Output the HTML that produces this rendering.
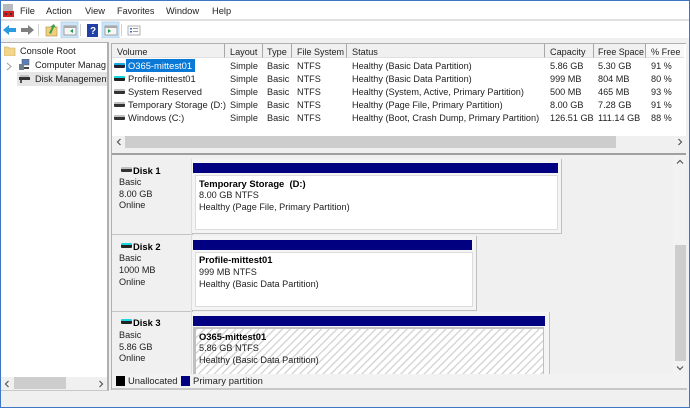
<!DOCTYPE html>
<html style="background:#f0f0f0"><head><meta charset="utf-8"><style>
html,body{margin:0;padding:0;width:690px;height:408px;overflow:hidden}
body{position:relative;font-family:"Liberation Sans",sans-serif;font-size:9.15px;color:#222;filter:blur(.3px)}
.a{position:absolute}
.t{position:absolute;white-space:pre;line-height:12px;height:12px}
.b{font-weight:bold;color:#000}
.m{font-size:9.3px}
.dk{position:absolute;width:11px;height:5px;background:linear-gradient(#c0c0c0 0 2px,#333 2px);border-radius:1px}
.dk.c{background:linear-gradient(#19d5e0 0 2px,#222 2px)}
.dk.u{background:linear-gradient(#19a8e0 0 2px,#223 2px)}
.h{position:absolute;top:44px;height:14px;background:#f0f0f0;border-right:1px solid #a8a8a8;border-bottom:1px solid #e0e0e0;box-sizing:border-box}
</style></head><body>
<div class="a" style="left:0;top:0;width:690px;height:408px;background:#f0f0f0"></div>
<div class="a" style="left:0;top:0;width:690px;height:19px;background:#fff"></div>
<div class="a" style="left:0;top:19px;width:690px;height:2px;background:#e0e0e0"></div>
<div class="a" style="left:0;top:21px;width:690px;height:17px;background:#fff"></div>

<!-- app icon -->
<svg class="a" style="left:1px;top:3px" width="14" height="15" viewBox="0 0 14 15"><rect x="2" y="1" width="10" height="7" fill="#b4bac0"/><rect x="2" y="8" width="11" height="6" fill="#d82020"/><rect x="4" y="10" width="2" height="2" fill="#333"/><rect x="9" y="10" width="2" height="2" fill="#333"/></svg>
<div class="t m" style="left:20px;top:5px">File</div>
<div class="t m" style="left:46px;top:5px">Action</div>
<div class="t m" style="left:85px;top:5px">View</div>
<div class="t m" style="left:117px;top:5px;font-size:9.1px">Favorites</div>
<div class="t m" style="left:166px;top:5px">Window</div>
<div class="t m" style="left:212px;top:5px">Help</div>

<!-- toolbar -->
<svg class="a" style="left:0;top:21px" width="150" height="17" viewBox="0 0 150 17">
<path d="M3 9 L9 4 V7 H16 V11 H9 V14 Z" fill="#2b9be0"/>
<path d="M34 9 L28 4 V7 H21 V11 H28 V14 Z" fill="#808080"/>
<rect x="38" y="3" width="1" height="12" fill="#d0d0d0"/>
<rect x="46" y="6" width="11" height="9" fill="#f0d080" stroke="#b89a50" stroke-width=".7"/>
<path d="M49 12 L52 6 L50 6 L54 3 L56 7 L54 6 L51 13 Z" fill="#3aa040"/>
<rect x="61" y="1" width="17" height="16" fill="#cde4f7" stroke="#a8d0f0" stroke-width=".8"/>
<rect x="64" y="5" width="12" height="9" fill="#f6f6f6" stroke="#909090" stroke-width=".8"/><rect x="64" y="5" width="12" height="2" fill="#a8a8a8"/><path d="M73 8 V12 L70 10 Z" fill="#1f9a50"/>
<rect x="80" y="3" width="1" height="12" fill="#d0d0d0"/>
<rect x="87" y="3" width="11" height="13" fill="#2040a8"/><text x="90" y="13" font-family="Liberation Sans" font-size="10" font-weight="bold" fill="#fff">?</text>
<rect x="102" y="1" width="17" height="16" fill="#cde4f7" stroke="#a8d0f0" stroke-width=".8"/>
<rect x="105" y="5" width="12" height="9" fill="#f6f6f6" stroke="#909090" stroke-width=".8"/><rect x="105" y="5" width="12" height="2" fill="#a8a8a8"/><path d="M108 8 V12 L111 10 Z" fill="#1f9a50"/>
<rect x="121" y="3" width="1" height="12" fill="#d0d0d0"/>
<rect x="128" y="5" width="12" height="9" fill="#fafafa" stroke="#a0a0a0" stroke-width=".8"/><rect x="130" y="7" width="2" height="1.5" fill="#3a70c0"/><rect x="130" y="10" width="2" height="1.5" fill="#3a70c0"/><rect x="133" y="7" width="5" height="1" fill="#999"/><rect x="133" y="10" width="5" height="1" fill="#999"/>
</svg>

<!-- left pane -->
<div class="a" style="left:1px;top:42px;width:108px;height:349px;background:#fff;border-right:2px solid #b0b0b0;border-top:1px solid #b0b0b0;border-bottom:1px solid #c8c8c8;box-sizing:border-box"></div>
<svg class="a" style="left:4px;top:46px" width="12" height="10"><path d="M0 1 H4 L5 2 H11 V10 H0 Z" fill="#f2d78a" stroke="#c8a860" stroke-width=".6"/></svg>
<div class="t" style="left:20px;top:45px;font-size:9.2px">Console Root</div>
<svg class="a" style="left:6px;top:62px" width="6" height="9"><path d="M1 1 L5 4.5 L1 8" fill="none" stroke="#a0a0a0"/></svg>
<svg class="a" style="left:18px;top:59px" width="12" height="12"><rect x="4" y="0" width="7" height="6" fill="#5b7fb8" stroke="#555" stroke-width=".5"/><rect x="1" y="5" width="5" height="6" fill="#708090"/><rect x="6" y="8" width="5" height="2" fill="#444"/></svg>
<div class="t" style="left:35px;top:59px;font-size:9.2px;width:72px;overflow:hidden">Computer Manag</div>
<div class="a" style="left:17px;top:72px;width:90px;height:14px;background:#e6e6e6"></div>
<svg class="a" style="left:19px;top:75px" width="11" height="8"><rect x="1" y="0" width="9" height="2" fill="#c0c0c0"/><rect x="0" y="2" width="11" height="3" fill="#333"/><rect x="1" y="5" width="2" height="3" fill="#555"/></svg>
<div class="t" style="left:35px;top:73px;font-size:9.2px;width:72px;overflow:hidden">Disk Management</div>
<div class="a" style="left:1px;top:377px;width:106px;height:13px;background:#f0f0f0"></div>
<div class="a" style="left:14px;top:377px;width:52px;height:12px;background:#cdcdcd"></div>
<svg class="a" style="left:4px;top:380px" width="6" height="8"><path d="M4.5 1 L1.5 4 L4.5 7" fill="none" stroke="#555" stroke-width="1.2"/></svg>
<svg class="a" style="left:98px;top:380px" width="6" height="8"><path d="M1.5 1 L4.5 4 L1.5 7" fill="none" stroke="#555" stroke-width="1.2"/></svg>

<!-- right outer -->
<div class="a" style="left:111px;top:43px;width:575px;height:105px;background:#fff;border-left:1px solid #b0b0b0;border-top:1px solid #b0b0b0;box-sizing:border-box"></div>

<!-- headers -->
<div class="h" style="left:112px;width:113px"></div>
<div class="h" style="left:225px;width:38px"></div>
<div class="h" style="left:263px;width:29px"></div>
<div class="h" style="left:292px;width:55px"></div>
<div class="h" style="left:347px;width:198px"></div>
<div class="h" style="left:545px;width:49px"></div>
<div class="h" style="left:594px;width:52px"></div>
<div class="h" style="left:646px;width:38px;border-right:none;background:#f8f8f8"></div>
<div class="t" style="left:117px;top:46px">Volume</div>
<div class="t" style="left:230px;top:46px">Layout</div>
<div class="t" style="left:267px;top:46px">Type</div>
<div class="t" style="left:297px;top:46px;font-size:9px">File System</div>
<div class="t" style="left:352px;top:46px">Status</div>
<div class="t" style="left:550px;top:46px">Capacity</div>
<div class="t" style="left:598px;top:46px;font-size:8.9px">Free Space</div>
<div class="t" style="left:651px;top:46px">% Free</div>

<!-- rows -->
<div class="a" style="left:126px;top:59px;width:69px;height:13px;background:#0a78d7"></div>
<div class="dk u" style="left:114px;top:63px"></div>
<div class="t" style="left:128px;top:60px;color:#fff;font-size:9.4px">O365-mittest01</div>
<div class="t" style="left:230px;top:60px">Simple</div><div class="t" style="left:267px;top:60px">Basic</div><div class="t" style="left:297px;top:60px">NTFS</div><div class="t" style="left:352px;top:60px">Healthy (Basic Data Partition)</div><div class="t" style="left:550px;top:60px">5.86 GB</div><div class="t" style="left:598px;top:60px">5.30 GB</div><div class="t" style="left:651px;top:60px">91 %</div>

<div class="dk c" style="left:114px;top:76px"></div>
<div class="t" style="left:128px;top:73px;font-size:9.4px">Profile-mittest01</div>
<div class="t" style="left:230px;top:73px">Simple</div><div class="t" style="left:267px;top:73px">Basic</div><div class="t" style="left:297px;top:73px">NTFS</div><div class="t" style="left:352px;top:73px">Healthy (Basic Data Partition)</div><div class="t" style="left:550px;top:73px">999 MB</div><div class="t" style="left:598px;top:73px">804 MB</div><div class="t" style="left:651px;top:73px">80 %</div>

<div class="dk" style="left:114px;top:89px"></div>
<div class="t" style="left:128px;top:86px;font-size:9.4px">System Reserved</div>
<div class="t" style="left:230px;top:86px">Simple</div><div class="t" style="left:267px;top:86px">Basic</div><div class="t" style="left:297px;top:86px">NTFS</div><div class="t" style="left:352px;top:86px">Healthy (System, Active, Primary Partition)</div><div class="t" style="left:550px;top:86px">500 MB</div><div class="t" style="left:598px;top:86px">465 MB</div><div class="t" style="left:651px;top:86px">93 %</div>

<div class="dk" style="left:114px;top:102px"></div>
<div class="t" style="left:128px;top:99px;font-size:9.4px">Temporary Storage (D:)</div>
<div class="t" style="left:230px;top:99px">Simple</div><div class="t" style="left:267px;top:99px">Basic</div><div class="t" style="left:297px;top:99px">NTFS</div><div class="t" style="left:352px;top:99px">Healthy (Page File, Primary Partition)</div><div class="t" style="left:550px;top:99px">8.00 GB</div><div class="t" style="left:598px;top:99px">7.28 GB</div><div class="t" style="left:651px;top:99px">91 %</div>

<div class="dk" style="left:114px;top:115px"></div>
<div class="t" style="left:128px;top:112px;font-size:9.4px">Windows (C:)</div>
<div class="t" style="left:230px;top:112px">Simple</div><div class="t" style="left:267px;top:112px">Basic</div><div class="t" style="left:297px;top:112px">NTFS</div><div class="t" style="left:352px;top:112px">Healthy (Boot, Crash Dump, Primary Partition)</div><div class="t" style="left:550px;top:112px">126.51 GB</div><div class="t" style="left:598px;top:112px">111.14 GB</div><div class="t" style="left:651px;top:112px">88 %</div>

<!-- list hscroll -->
<div class="a" style="left:112px;top:136px;width:574px;height:12px;background:#f0f0f0"></div>
<div class="a" style="left:125px;top:136px;width:491px;height:12px;background:#cdcdcd"></div>
<svg class="a" style="left:116px;top:138px" width="6" height="8"><path d="M4.5 1 L1.5 4 L4.5 7" fill="none" stroke="#555" stroke-width="1.2"/></svg>
<svg class="a" style="left:677px;top:138px" width="6" height="8"><path d="M1.5 1 L4.5 4 L1.5 7" fill="none" stroke="#555" stroke-width="1.2"/></svg>

<!-- lower pane -->
<div class="a" style="left:111px;top:153px;width:575px;height:2px;background:#a0a0a0"></div>
<div class="a" style="left:112px;top:155px;width:574px;height:219px;background:#f0f0f0"></div>
<div class="a" style="left:112px;top:234px;width:81px;height:1px;background:#c4c4c4"></div>
<div class="a" style="left:112px;top:311px;width:81px;height:1px;background:#c4c4c4"></div>
<div class="a" style="left:191px;top:159px;width:1px;height:215px;background:#dcdcdc"></div>

<!-- disk labels -->
<div class="dk" style="left:121px;top:167px"></div>
<div class="t b" style="left:133px;top:165px;font-size:9.4px">Disk 1</div>
<div class="t" style="left:119px;top:176px">Basic</div><div class="t" style="left:119px;top:188px">8.00 GB</div><div class="t" style="left:119px;top:199px">Online</div>
<div class="dk c" style="left:121px;top:243px"></div>
<div class="t b" style="left:133px;top:241px;font-size:9.4px">Disk 2</div>
<div class="t" style="left:119px;top:252px">Basic</div><div class="t" style="left:119px;top:264px">1000 MB</div><div class="t" style="left:119px;top:276px">Online</div>
<div class="dk c" style="left:121px;top:319px"></div>
<div class="t b" style="left:133px;top:317px;font-size:9.4px">Disk 3</div>
<div class="t" style="left:119px;top:329px">Basic</div><div class="t" style="left:119px;top:341px">5.86 GB</div><div class="t" style="left:119px;top:352px">Online</div>

<!-- vol 1 -->
<div class="a" style="left:192px;top:159px;width:370px;height:75px;background:#f4f4f4;border-right:1px solid #c0c0c0;border-bottom:1px solid #c0c0c0;box-sizing:border-box"></div>
<div class="a" style="left:193px;top:163px;width:365px;height:10px;background:#000080"></div>
<div class="a" style="left:195px;top:175px;width:363px;height:55px;background:#dcdcdc"></div>
<div class="a" style="left:196px;top:176px;width:361px;height:53px;background:#fff"></div>
<div class="t b" style="left:199px;top:178px;font-size:9.4px">Temporary Storage&nbsp; (D:)</div>
<div class="t" style="left:199px;top:189px">8.00 GB NTFS</div>
<div class="t" style="left:199px;top:201px">Healthy (Page File, Primary Partition)</div>

<!-- vol 2 -->
<div class="a" style="left:192px;top:236px;width:285px;height:75px;background:#f4f4f4;border-right:1px solid #c0c0c0;border-bottom:1px solid #c0c0c0;box-sizing:border-box"></div>
<div class="a" style="left:193px;top:240px;width:279px;height:10px;background:#000080"></div>
<div class="a" style="left:195px;top:252px;width:278px;height:55px;background:#dcdcdc"></div>
<div class="a" style="left:196px;top:253px;width:276px;height:53px;background:#fff"></div>
<div class="t b" style="left:199px;top:254px;font-size:9.4px">Profile-mittest01</div>
<div class="t" style="left:199px;top:266px">999 MB NTFS</div>
<div class="t" style="left:199px;top:278px">Healthy (Basic Data Partition)</div>

<!-- vol 3 -->
<div class="a" style="left:192px;top:312px;width:358px;height:62px;background:#f4f4f4;border-right:1px solid #c0c0c0;box-sizing:border-box"></div>
<div class="a" style="left:193px;top:316px;width:352px;height:10px;background:#000080"></div>
<div class="a" style="left:193px;top:327px;width:351px;height:47px;background:#c0c0c0"></div>
<svg class="a" style="left:196px;top:329px" width="347" height="45"><defs><pattern id="p" width="5.5" height="5.5" patternUnits="userSpaceOnUse" patternTransform="rotate(45)"><rect width="5.5" height="5.5" fill="#fff"/><rect width="1.3" height="5.5" fill="#d2d2d2"/></pattern></defs><rect width="347" height="45" fill="url(#p)"/></svg>
<div class="t b" style="left:199px;top:331px;font-size:9.4px">O365-mittest01</div>
<div class="t" style="left:199px;top:342px">5.86 GB NTFS</div>
<div class="t" style="left:199px;top:354px">Healthy (Basic Data Partition)</div>

<!-- lower vscroll -->
<div class="a" style="left:673px;top:155px;width:13px;height:219px;background:#f2f2f2"></div>
<div class="a" style="left:675px;top:245px;width:11px;height:116px;background:#cdcdcd"></div>
<svg class="a" style="left:676px;top:159px" width="8" height="6"><path d="M1 4.5 L4 1.5 L7 4.5" fill="none" stroke="#555" stroke-width="1.2"/></svg>
<svg class="a" style="left:676px;top:365px" width="8" height="6"><path d="M1 1.5 L4 4.5 L7 1.5" fill="none" stroke="#555" stroke-width="1.2"/></svg>

<!-- legend -->
<div class="a" style="left:112px;top:374px;width:575px;height:14px;background:#f2f2f2"></div>
<div class="a" style="left:111px;top:388px;width:576px;height:2px;background:#c8c8c8"></div>
<div class="a" style="left:111px;top:43px;width:1px;height:347px;background:#b0b0b0"></div>
<div class="a" style="left:116px;top:376px;width:9px;height:10px;background:#000"></div>
<div class="t" style="left:128px;top:375px;font-size:9.4px">Unallocated</div>
<div class="a" style="left:181px;top:376px;width:9px;height:10px;background:#000080"></div>
<div class="t" style="left:193px;top:375px;font-size:9.4px;letter-spacing:.1px">Primary partition</div>

<!-- window border -->
<div class="a" style="left:0;top:0;width:690px;height:408px;border:1px solid #3f76c6;box-sizing:border-box;pointer-events:none"></div>
</body></html>
